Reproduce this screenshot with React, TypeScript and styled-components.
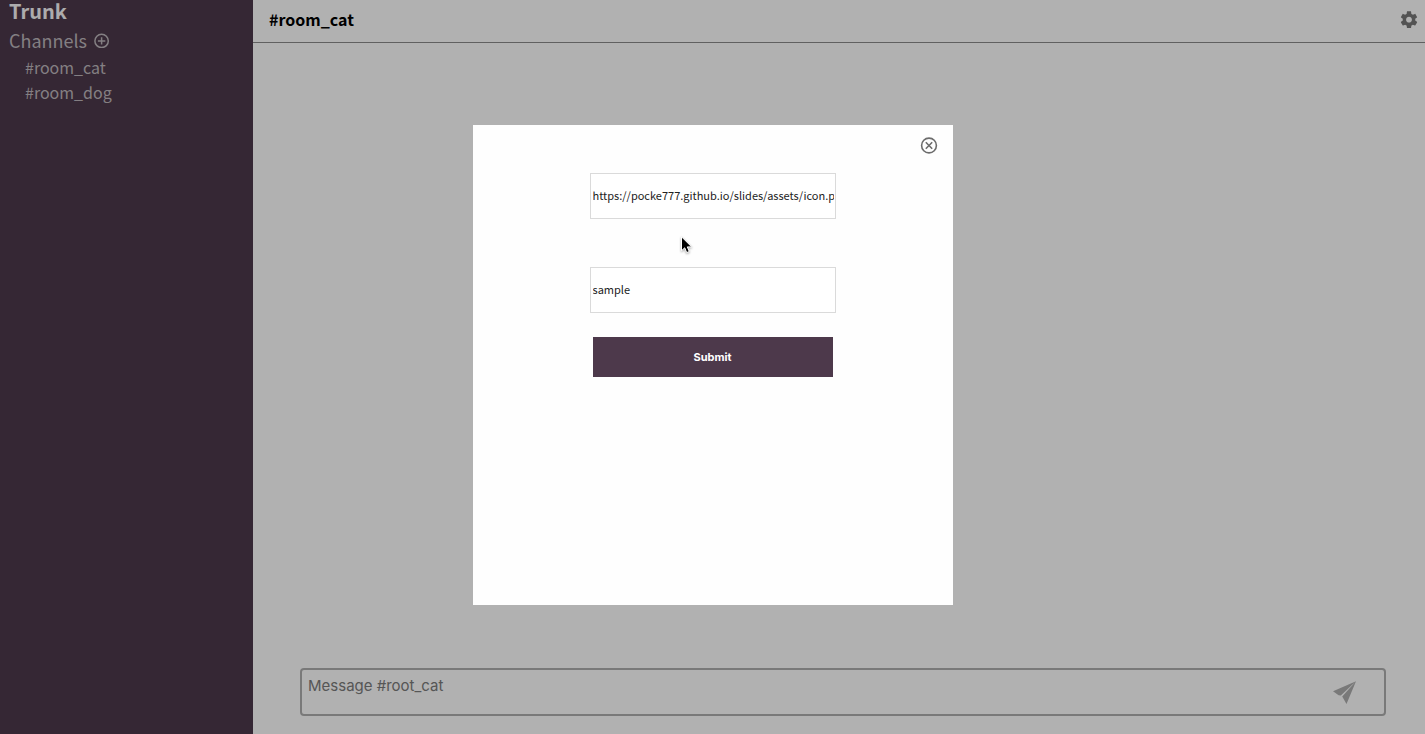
import React, { useState } from "react";
import styled, { createGlobalStyle } from "styled-components";

const GlobalStyle = createGlobalStyle`
  *, *::before, *::after { box-sizing: border-box; }
  body {
    margin: 0;
    background: #fefefe;
    font-family: "Noto Sans CJK JP", "Noto Sans", sans-serif;
    overflow: hidden;
  }
`;

const Page = styled.div`
  display: flex;
  height: 100vh;
`;

const Sidebar = styled.nav`
  flex: 0 0 253px;
  padding: 0 9px;
  background: #4d394b;
  color: #bdb7bc;
`;

const Brand = styled.h1`
  margin: 0;
  font-size: 20px;
  line-height: 22px;
  color: #f8f6f8;
`;

const ChannelsHeading = styled.h2`
  display: flex;
  align-items: center;
  gap: 7px;
  margin: 0;
  padding-top: 3px;
  font-size: 18px;
  font-weight: 400;
  line-height: 30px;
`;

const IconButton = styled.button<{ $color?: string }>`
  display: flex;
  padding: 0;
  border: 0;
  background: none;
  color: ${({ $color }) => $color ?? "inherit"};
  cursor: pointer;
`;

const ChannelList = styled.ul`
  margin: 0;
  padding: 0 0 0 16px;
  list-style: none;
`;

const ChannelLink = styled.a`
  display: block;
  font-size: 16px;
  font-weight: 400;
  line-height: 25px;
  color: inherit;
  text-decoration: none;
`;

const Main = styled.main`
  flex: 1;
  display: flex;
  flex-direction: column;
  min-width: 0;
`;

const Header = styled.header`
  display: flex;
  align-items: center;
  justify-content: space-between;
  height: 43px;
  padding: 0 6px 4px 16px;
  border-bottom: 1px solid #8a8a8a;
`;

const RoomTitle = styled.h2`
  margin: 0;
  font-size: 16px;
  line-height: 24px;
  color: #000;
`;

const Messages = styled.section`
  flex: 1;
`;

const Composer = styled.form`
  display: flex;
  align-items: center;
  height: 48px;
  margin: 0 39px 18px 47px;
  padding: 0 27px 0 6px;
  border: 2px solid #aeaeae;
  border-radius: 4px;
`;

const MessageInput = styled.textarea`
  flex: 1;
  height: 44px;
  padding: 6px 0;
  border: 0;
  outline: 0;
  resize: none;
  background: none;
  font: 15px/20px Inter, sans-serif;
  &::placeholder { color: #7b7b7b; opacity: 1; }
`;

const Overlay = styled.div`
  position: fixed;
  inset: 0;
  display: flex;
  align-items: center;
  justify-content: center;
  padding-bottom: 4px;
  background: rgba(0, 0, 0, 0.3);
`;

const Dialog = styled.div`
  width: 480px;
  height: 480px;
  background: #fefefe;
`;

const DialogBar = styled.div`
  display: flex;
  justify-content: flex-end;
  padding: 12px 15px 0;
`;

const ProfileForm = styled.form`
  display: flex;
  flex-direction: column;
  align-items: center;
  padding-top: 18px;
`;

const TextField = styled.input`
  width: 246px;
  height: 46px;
  margin-bottom: 48px;
  padding: 0 1px 2px 2px;
  border: 1px solid #dadada;
  outline: 0;
  background: #fff;
  color: #222;
  font: 11px/20px "Noto Sans CJK JP", "Noto Sans", sans-serif;
  &:last-of-type { margin-bottom: 24px; }
`;

const SubmitButton = styled.button`
  width: 240px;
  height: 40px;
  border: 0;
  background: #4d394b;
  color: #fff;
  font: 700 11px/16px Inter, sans-serif;
  cursor: pointer;
`;

const Pointer = styled.svg`
  position: fixed;
  left: 680px;
  top: 235px;
  pointer-events: none;
  filter: drop-shadow(0 1px 1px rgba(0, 0, 0, 0.35));
`;

const AddIcon = () => (
  <svg width="16" height="16" viewBox="0 0 16 16" fill="none" stroke="currentColor" strokeWidth="1.5" aria-hidden="true">
    <circle cx="7.6" cy="8.9" r="6.7" />
    <path d="M7.6 5.2v7.4M3.9 8.9h7.4" />
  </svg>
);

const CloseIcon = () => (
  <svg width="18" height="18" viewBox="0 0 18 18" fill="none" stroke="currentColor" strokeWidth="1.6" aria-hidden="true">
    <circle cx="9" cy="8.5" r="7.4" />
    <path d="M5.8 5.3l6.4 6.4M12.2 5.3l-6.4 6.4" />
  </svg>
);

const GearIcon = () => (
  <svg width="20" height="20" viewBox="0 0 24 24" fill="currentColor" aria-hidden="true">
    <path transform="translate(0 0.8)" d="M19.43 12.98c.04-.32.07-.64.07-.98s-.03-.66-.07-.98l2.11-1.65c.19-.15.24-.42.12-.64l-2-3.46c-.12-.22-.39-.3-.61-.22l-2.49 1c-.52-.4-1.08-.73-1.69-.98l-.38-2.65C14.46 2.18 14.25 2 14 2h-4c-.25 0-.46.18-.49.42l-.38 2.65c-.61.25-1.17.59-1.69.98l-2.49-1c-.23-.09-.49 0-.61.22l-2 3.46c-.13.22-.07.49.12.64l2.11 1.65c-.04.32-.07.65-.07.98s.03.66.07.98l-2.11 1.65c-.19.15-.24.42-.12.64l2 3.46c.12.22.39.3.61.22l2.49-1c.52.4 1.08.73 1.69.98l.38 2.65c.03.24.24.42.49.42h4c.25 0 .46-.18.49-.42l.38-2.65c.61-.25 1.17-.59 1.69-.98l2.49 1c.23.09.49 0 .61-.22l2-3.46c.12-.22.07-.49-.12-.64l-2.11-1.65zM12 15.5c-1.93 0-3.5-1.57-3.5-3.5s1.57-3.5 3.5-3.5 3.5 1.57 3.5 3.5-1.57 3.5-3.5 3.5z" />
  </svg>
);

const PlaneIcon = () => (
  <svg width="24" height="24" viewBox="0 0 24 24" fill="currentColor" aria-hidden="true">
    <path d="M23 1.2L0 11.2l5.6 4 2.2.2zM23 1.2L9.2 16.6l4.3 7.4z" />
  </svg>
);

const channels = ["#room_cat", "#room_dog"];

export default function App() {
  const [iconUrl, setIconUrl] = useState("https://pocke777.github.io/slides/assets/icon.png");
  const [name, setName] = useState("sample");
  const [message, setMessage] = useState("");
  const stay = (event: React.FormEvent) => event.preventDefault();

  return (
    <>
      <GlobalStyle />
      <Page>
        <Sidebar>
          <Brand>Trunk</Brand>
          <ChannelsHeading>
            Channels
            <IconButton type="button" aria-label="Add channel"><AddIcon /></IconButton>
          </ChannelsHeading>
          <ChannelList>
            {channels.map((channel) => (
              <li key={channel}><ChannelLink href={channel}>{channel}</ChannelLink></li>
            ))}
          </ChannelList>
        </Sidebar>
        <Main>
          <Header>
            <RoomTitle>#room_cat</RoomTitle>
            <IconButton type="button" aria-label="Settings" $color="#777"><GearIcon /></IconButton>
          </Header>
          <Messages />
          <Composer onSubmit={stay}>
            <MessageInput
              aria-label="Message"
              placeholder="Message #root_cat"
              value={message}
              onChange={(e) => setMessage(e.target.value)}
            />
            <IconButton type="submit" aria-label="Send" $color="#aeaeae"><PlaneIcon /></IconButton>
          </Composer>
        </Main>
      </Page>
      <Overlay>
        <Dialog role="dialog" aria-modal="true" aria-label="Profile settings">
          <DialogBar>
            <IconButton type="button" aria-label="Close" $color="#6c6c6c"><CloseIcon /></IconButton>
          </DialogBar>
          <ProfileForm onSubmit={stay}>
            <TextField aria-label="Icon URL" value={iconUrl} onChange={(e) => setIconUrl(e.target.value)} />
            <TextField aria-label="Name" value={name} onChange={(e) => setName(e.target.value)} />
            <SubmitButton type="submit">Submit</SubmitButton>
          </ProfileForm>
        </Dialog>
      </Overlay>
      <Pointer width="14" height="20" viewBox="0 0 14 20" aria-hidden="true">
        <path d="M1.5 1.8v14l3.2-3 2 4.8 2.6-1.1-2-4.6h4.4z" fill="#000" stroke="#fff" strokeWidth="1" />
      </Pointer>
    </>
  );
}
